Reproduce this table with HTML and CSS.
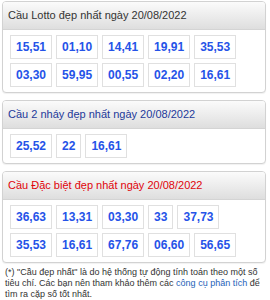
FILE: index.html
```html
<!DOCTYPE html>
<html lang="vi">
<head>
<meta charset="utf-8">
<link rel="stylesheet" href="styles.css">
</head>
<body>
<div class="page">
  <section class="card">
    <div class="card-head">Cầu Lotto đẹp nhất ngày 20/08/2022</div>
    <div class="card-body">
      <span class="num">15,51</span><span class="num">01,10</span><span class="num">14,41</span><span class="num">19,91</span><span class="num">35,53</span>
      <span class="num">03,30</span><span class="num">59,95</span><span class="num">00,55</span><span class="num">02,20</span><span class="num">16,61</span>
    </div>
  </section>
  <section class="card">
    <div class="card-head head-blue">Cầu 2 nháy đẹp nhất ngày 20/08/2022</div>
    <div class="card-body">
      <span class="num">25,52</span><span class="num">22</span><span class="num">16,61</span>
    </div>
  </section>
  <section class="card">
    <div class="card-head head-red">Cầu Đặc biệt đẹp nhất ngày 20/08/2022</div>
    <div class="card-body">
      <span class="num">36,63</span><span class="num">13,31</span><span class="num">03,30</span><span class="num">33</span><span class="num">37,73</span>
      <span class="num">35,53</span><span class="num">16,61</span><span class="num">67,76</span><span class="num">06,60</span><span class="num">56,65</span>
    </div>
  </section>
  <p class="note">(*) "Cầu đẹp nhất" là do hệ thống tự động tính toán theo một số tiêu chí. Các bạn nên tham khảo thêm các <a class="link" href="#">công cụ phân tích</a> để tìm ra cặp số tốt nhất.</p>
</div>
</body>
</html>
```

FILE: styles.css
```css
html, body {
  margin: 0;
  padding: 0;
  background: #fff;
}
.page {
  padding: 1px 4px 0 2px;
  font-family: "Liberation Sans", Arial, sans-serif;
}
.card {
  border: 1px solid #d2d2d2;
  border-radius: 4px;
  background: #fff;
  overflow: hidden;
  box-shadow: 0 1px 1px rgba(0,0,0,0.06);
}
.card + .card {
  margin-top: 7px;
}
.card-head {
  height: 27px;
  line-height: 27px;
  padding: 0 5px;
  font-size: 11px;
  color: #333;
  background: linear-gradient(#fbfbfb, #dedede);
  border-bottom: 1px solid #d4d4d4;
  white-space: nowrap;
}
.head-blue {
  color: #23399a;
}
.head-red {
  color: #e0040b;
}
.card-body {
  display: flex;
  flex-wrap: wrap;
  gap: 4px;
  padding: 5px 7px;
}
.num {
  display: block;
  border: 1px solid #e0e0e0;
  padding: 0 5px;
  height: 22px;
  line-height: 22px;
  font-size: 12px;
  font-weight: bold;
  color: #2553e8;
}
.note {
  margin: 0;
  padding: 4px 2px 0 3px;
  font-size: 9px;
  line-height: 11px;
  color: #333;
}
.link {
  color: #1d62b8;
  text-decoration: none;
}
```
